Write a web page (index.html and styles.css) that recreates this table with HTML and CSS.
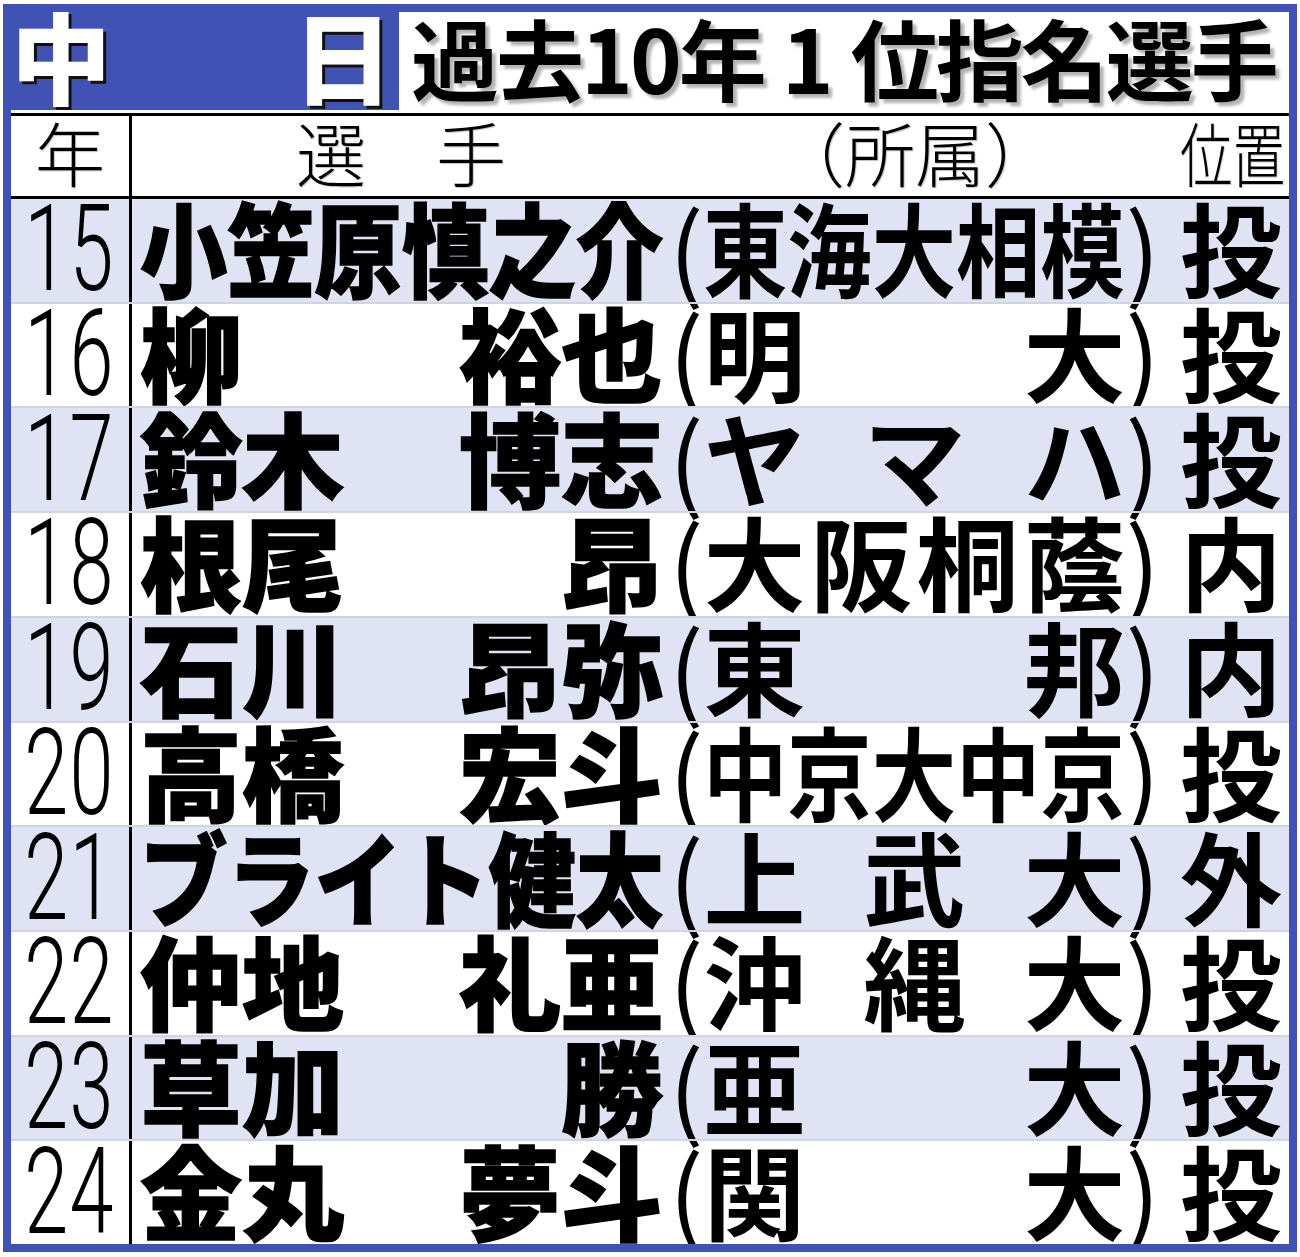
FILE: index.html
```html
<!DOCTYPE html>
<html lang="ja">
<head>
<meta charset="utf-8">
<title>中日 過去10年1位指名選手</title>
<link rel="stylesheet" href="styles.css">
</head>
<body>
<div class="frame">
  <div class="head">
    <div class="brand"><span>中</span><span>日</span></div>
    <div class="title">過去10年<span class="one">1</span>位指名選手</div>
  </div>
  <div class="table">
    <div class="row thead">
      <div class="yr"><span class="th-yr">年</span></div>
      <div class="cell th-cell">
        <span class="th-name">選　手</span>
        <span class="th-aff">（所属）</span>
        <span class="th-pos">位置</span>
      </div>
    </div>
    <div class="rows">
      <div class="row alt">
        <div class="yr"><span class="num">15</span></div>
        <div class="cell">
          <div class="name"><span class="n6">小笠原慎之介</span></div>
          <div class="aff"><span class="p">(</span><span class="aff-in"><span class="a5">東海大相模</span></span><span class="p">)</span></div>
          <div class="pos">投</div>
        </div>
      </div>
      <div class="row">
        <div class="yr"><span class="num">16</span></div>
        <div class="cell">
          <div class="name"><span>柳</span><span>裕也</span></div>
          <div class="aff"><span class="p">(</span><span class="aff-in"><span>明</span><span>大</span></span><span class="p">)</span></div>
          <div class="pos">投</div>
        </div>
      </div>
      <div class="row alt">
        <div class="yr"><span class="num">17</span></div>
        <div class="cell">
          <div class="name"><span>鈴木</span><span>博志</span></div>
          <div class="aff"><span class="p">(</span><span class="aff-in"><span>ヤ</span><span>マ</span><span>ハ</span></span><span class="p">)</span></div>
          <div class="pos">投</div>
        </div>
      </div>
      <div class="row">
        <div class="yr"><span class="num">18</span></div>
        <div class="cell">
          <div class="name"><span>根尾</span><span>昂</span></div>
          <div class="aff"><span class="p">(</span><span class="aff-in"><span>大</span><span>阪</span><span>桐</span><span>蔭</span></span><span class="p">)</span></div>
          <div class="pos">内</div>
        </div>
      </div>
      <div class="row alt">
        <div class="yr"><span class="num">19</span></div>
        <div class="cell">
          <div class="name"><span>石川</span><span>昂弥</span></div>
          <div class="aff"><span class="p">(</span><span class="aff-in"><span>東</span><span>邦</span></span><span class="p">)</span></div>
          <div class="pos">内</div>
        </div>
      </div>
      <div class="row">
        <div class="yr"><span class="num">20</span></div>
        <div class="cell">
          <div class="name"><span>高橋</span><span>宏斗</span></div>
          <div class="aff"><span class="p">(</span><span class="aff-in"><span class="a5">中京大中京</span></span><span class="p">)</span></div>
          <div class="pos">投</div>
        </div>
      </div>
      <div class="row alt">
        <div class="yr"><span class="num">21</span></div>
        <div class="cell">
          <div class="name"><span class="n6">ブライト健太</span></div>
          <div class="aff"><span class="p">(</span><span class="aff-in"><span>上</span><span>武</span><span>大</span></span><span class="p">)</span></div>
          <div class="pos">外</div>
        </div>
      </div>
      <div class="row">
        <div class="yr"><span class="num">22</span></div>
        <div class="cell">
          <div class="name"><span>仲地</span><span>礼亜</span></div>
          <div class="aff"><span class="p">(</span><span class="aff-in"><span>沖</span><span>縄</span><span>大</span></span><span class="p">)</span></div>
          <div class="pos">投</div>
        </div>
      </div>
      <div class="row alt">
        <div class="yr"><span class="num">23</span></div>
        <div class="cell">
          <div class="name"><span>草加</span><span>勝</span></div>
          <div class="aff"><span class="p">(</span><span class="aff-in"><span>亜</span><span>大</span></span><span class="p">)</span></div>
          <div class="pos">投</div>
        </div>
      </div>
      <div class="row">
        <div class="yr"><span class="num">24</span></div>
        <div class="cell">
          <div class="name"><span>金丸</span><span>夢斗</span></div>
          <div class="aff"><span class="p">(</span><span class="aff-in"><span>関</span><span>大</span></span><span class="p">)</span></div>
          <div class="pos">投</div>
        </div>
      </div>
    </div>
  </div>
</div>
</body>
</html>
```
FILE: styles.css
```css
* { box-sizing: border-box; }
html, body { margin: 0; padding: 0; background: #fff; }
body {
  font-family: "Noto Sans CJK JP", "Noto Sans", sans-serif;
  color: #000;
}
.frame {
  margin: 4px 0 0 3px;
  width: 1294px;
  height: 1248px;
  border: 8px solid #4152b5;
  background: #fff;
  display: flex;
  flex-direction: column;
  overflow: hidden;
}
.head {
  height: 98px;
  display: flex;
  flex: none;
}
.brand {
  width: 388px;
  flex: none;
  background: #4152b5;
  display: flex;
  justify-content: space-between;
  align-items: flex-start;
  padding: 0 6px 0 0;
  font-size: 100px;
  line-height: 84px;
  font-weight: 900;
  color: #fff;
  text-shadow: 3px 3px 0 #111;
}
.title {
  flex: 1;
  min-width: 0;
  margin-top: 1px;
  background: #fff;
  padding-left: 12px;
  font-size: 88px;
  line-height: 86px;
  font-weight: 700;
  letter-spacing: -3px;
  white-space: nowrap;
  text-shadow: 4px 4px 3px rgba(0, 0, 0, 0.3);
}
.title .one { margin: 0 20px 0 18px; }
.table {
  flex: 1;
  min-height: 0;
  margin-top: 3px;
  border-top: 3px solid #000;
  display: flex;
  flex-direction: column;
}
.row {
  display: flex;
}
.yr {
  width: 118px;
  flex: none;
  display: flex;
  align-items: center;
  justify-content: center;
}
.cell {
  flex: 1;
  border-left: 3px solid #000;
  display: flex;
  align-items: center;
}
.thead {
  height: 83px;
  border-bottom: 3px solid #000;
  flex: none;
}
.th-yr, .th-cell {
  font-size: 70px;
  line-height: 70px;
  font-weight: 300;
  text-shadow: 1px 1px 1px rgba(0, 0, 0, 0.25);
}
.thead .yr, .th-cell { padding-bottom: 8px; }
.th-name { margin-left: 164px; }
.th-aff { margin-left: 269px; }
.th-pos {
  margin-left: auto;
  margin-right: 4px;
  display: inline-block;
  transform: scaleX(0.75);
  transform-origin: right center;
}
.rows {
  flex: 1;
  min-height: 0;
  display: flex;
  flex-direction: column;
}
.rows .row {
  flex: 1 1 0;
  min-height: 0;
  border-top: 2px solid #d3d5de;
}
.rows .row:first-child { border-top: none; }
.row.alt { background: #e0e3f3; }
.num {
  display: inline-block;
  font-family: Roboto, "Liberation Sans", sans-serif;
  font-weight: 300;
  font-size: 120px;
  line-height: 1;
  transform: scaleX(0.66);
  letter-spacing: 2px;
}
.rows .yr { padding-bottom: 2px; }
.rows .cell {
  padding-left: 8px;
  padding-bottom: 8px;
  font-size: 102px;
  line-height: 1;
}
.name {
  width: 523px;
  flex: none;
  display: flex;
  justify-content: space-between;
  font-weight: 900;
  -webkit-text-stroke: 1.5px #000;
}
.name span { flex: none; white-space: nowrap; }
.n6 {
  display: inline-block;
  transform: scaleX(0.855);
  transform-origin: left center;
}
.aff {
  margin-left: 6px;
  display: flex;
  flex: none;
  font-weight: 700;
}
.aff .p { font-weight: 400; }
.aff-in {
  width: 422px;
  display: flex;
  justify-content: space-between;
}
.aff-in span { flex: none; white-space: nowrap; }
.a5 {
  display: inline-block;
  transform: scaleX(0.827);
  transform-origin: left center;
}
.pos {
  margin-left: auto;
  margin-right: 7px;
  font-weight: 700;
}
```
